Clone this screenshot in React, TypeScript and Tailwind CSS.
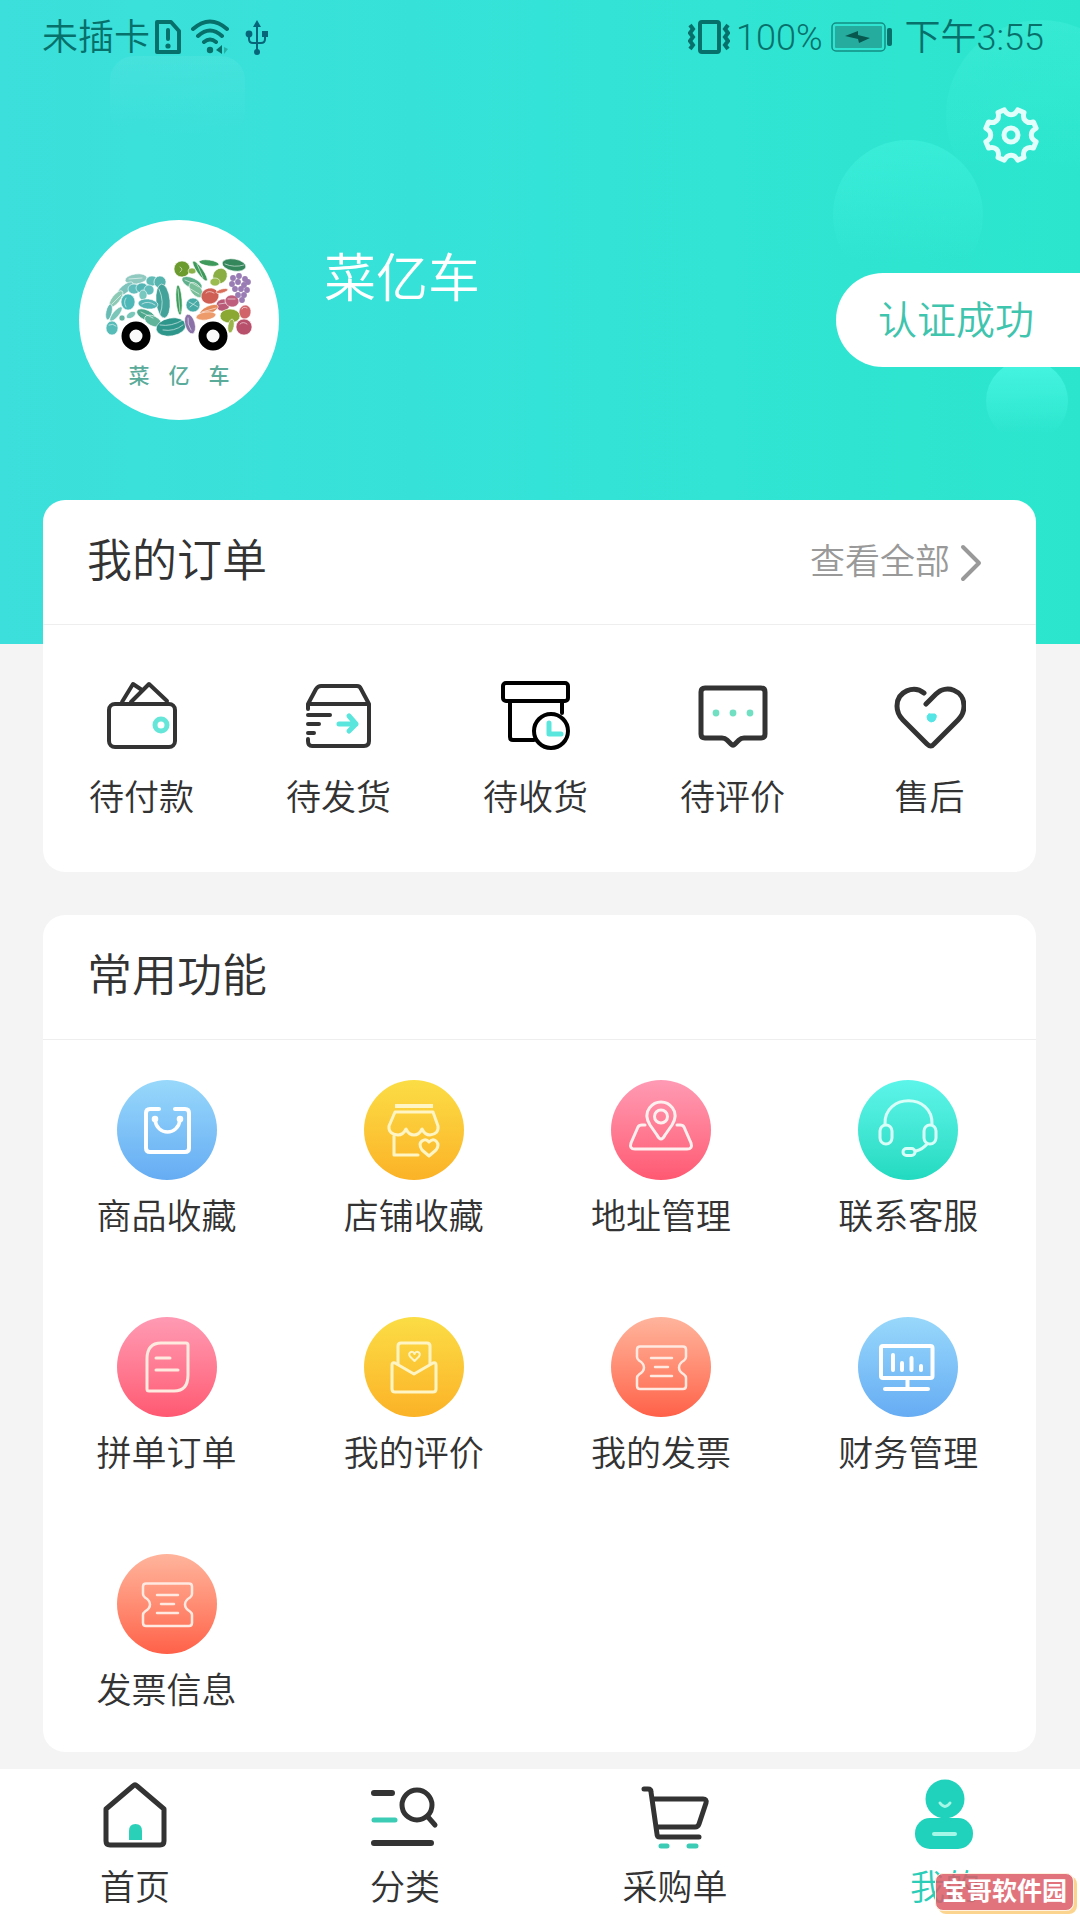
import type { ReactNode } from "react";

type Entry = { label: string; icon: ReactNode };

const INK = "#333333";
const TEAL = "#5ae6dc";

// eight teeth, with a rounded notch between each pair
const gearPath = (() => {
  const point = (deg: number, r: number) => {
    const a = (deg * Math.PI) / 180;
    return `${(29 + r * Math.sin(a)).toFixed(1)} ${(29 - r * Math.cos(a)).toFixed(1)}`;
  };
  let d = `M${point(-15, 26)}`;
  for (let k = 0; k < 8; k++) {
    const a = k * 45;
    d += `C${point(a - 10, 19)} ${point(a + 10, 19)} ${point(a + 15, 26)}L${point(a + 30, 26)}`;
  }
  return d + "Z";
})();

function LineIcon({ children, color = INK, width = 4 }: { children: ReactNode; color?: string; width?: number }) {
  return (
    <svg
      viewBox="0 0 72 72"
      className="size-[72px]"
      fill="none"
      stroke={color}
      strokeWidth={width}
      strokeLinecap="round"
      strokeLinejoin="round"
      aria-hidden="true"
    >
      {children}
    </svg>
  );
}

function RoundIcon({ className, stroke, children }: { className: string; stroke: string; children: ReactNode }) {
  return (
    <span className={`block size-[100px] rounded-full bg-linear-to-b ${className}`}>
      <svg
        viewBox="0 0 100 100"
        className="size-full"
        fill="none"
        stroke={stroke}
        strokeWidth="3"
        strokeLinecap="round"
        strokeLinejoin="round"
        aria-hidden="true"
      >
        {children}
      </svg>
    </span>
  );
}

const ticketIcon = (
  <RoundIcon className="from-[#ffb49c] to-[#ff6048]" stroke="#ffe9e0">
    <path d="M29 29.500H72Q75 29.500 75 32.500V40Q75 42 73 43.500Q68 46.500 68 50.500T73 57.500Q75 59 75 61V69Q75 72 72 72H29Q26 72 26 69V61Q26 59 28 57.500Q33 54.500 33 50.500T28 43.500Q26 42 26 40V32.500Q26 29.500 29 29.500Z" strokeWidth="2.500" />
    <path d="M40 41H61M44 50H57M40 59H61" strokeWidth="2.500" />
  </RoundIcon>
);

const orders: Entry[] = [
  {
    label: "待付款",
    icon: (
      <LineIcon>
        <rect x="3" y="25" width="66" height="43" rx="6" />
        <path d="M16 23L27 5L36 11M25 23L43 5L61 22" />
        <circle cx="55" cy="46" r="6" stroke="#66e6d8" strokeWidth="5" />
      </LineIcon>
    ),
  },
  {
    label: "待发货",
    icon: (
      <LineIcon>
        <path d="M5 30V25L13 10Q15 7 18 7H54Q57 7 58 10L66 25V62Q66 67 61 67H9Q5 67 5 62V60M5 25H66" />
        <path d="M5 36H27M5 45H16M5 54H11" />
        <path d="M36 45H53M46 37L53 45L46 52" stroke={TEAL} strokeWidth="5" />
      </LineIcon>
    ),
  },
  {
    label: "待收货",
    icon: (
      <LineIcon color="#000000">
        <rect x="3" y="4" width="65" height="18" rx="3" />
        <path d="M10 22V58Q10 61 13 61H34M62 22V34" />
        <circle cx="51" cy="52" r="17" />
        <path d="M49 44V55H61" stroke={TEAL} strokeWidth="5" />
      </LineIcon>
    ),
  },
  {
    label: "待评价",
    icon: (
      <LineIcon width={5}>
        <path d="M8 9H64Q68 9 68 13V55Q68 59 64 59H47Q44 59 42 61L38 65Q36 67 34 65L30 61Q28 59 25 59H8Q4 59 4 55V13Q4 9 8 9Z" />
        <g fill="#70dfc2" stroke="none">
          <circle cx="19" cy="34" r="3.400" />
          <circle cx="36" cy="34" r="3.400" />
          <circle cx="53" cy="34" r="3.400" />
        </g>
      </LineIcon>
    ),
  },
  {
    label: "售后",
    icon: (
      <LineIcon>
        <path d="M30 14C20 6 3 12 3 27Q3 35 9 41L33 65Q37 69 40 65L64 41Q70 35 70 27C70 11 52 5 42 15L32 25" strokeWidth="5" />
        <path d="M35 35H41Q43 36 42 39Q41 43 37 43Q33 42 33 38Q33 36 35 35Z" fill="#55e5e5" stroke="#55e5e5" strokeWidth="1" />
      </LineIcon>
    ),
  },
];

const features: Entry[] = [
  {
    label: "商品收藏",
    icon: (
      <RoundIcon className="from-[#98d8fb] to-[#66acf3]" stroke="#ffffff">
        <path d="M42 29H33Q29 29 29 33V68Q29 72 33 72H68Q72 72 72 68V33Q72 29 68 29H58" strokeWidth="4" />
        <path d="M38 40C40 56 61 56 63 40" strokeWidth="3.500" />
        <circle cx="38" cy="39" r="1.800" />
        <circle cx="63" cy="39" r="1.800" />
      </RoundIcon>
    ),
  },
  {
    label: "店铺收藏",
    icon: (
      <RoundIcon className="from-[#fbdd45] to-[#fbb226]" stroke="#fff5c4">
        <path d="M31 26H69" strokeLinecap="butt" strokeWidth="4" />
        <path d="M31 32H69L74 46Q75 54 66 55Q61 55 58 49Q55 55 50 55T42 49Q39 55 34 55Q24 54 25 46Z" />
        <path d="M30 56V75H54M65 76L58 70Q54 64 58 61Q62 58 65 62Q69 58 72 61Q76 65 72 70Z" />
      </RoundIcon>
    ),
  },
  {
    label: "地址管理",
    icon: (
      <RoundIcon className="from-[#ff9ab4] to-[#ff5872]" stroke="#fff0f0">
        <path d="M50 59Q48 59 46 55L39 45C30 30 43 22 50 22S70 30 61 45L54 55Q52 59 50 59Z" />
        <circle cx="50" cy="36.500" r="6.500" />
        <path d="M34 45H31Q28 45 27 47L20 63Q18 69 24 69H76Q82 69 80 63L73 47Q72 45 69 45H66" />
      </RoundIcon>
    ),
  },
  {
    label: "联系客服",
    icon: (
      <RoundIcon className="from-[#5cf5ea] to-[#20dac0]" stroke="#d8fff8">
        <path d="M27 44C26 13 75 13 74 44" />
        <rect x="22" y="45" width="12" height="19" rx="6" />
        <rect x="66" y="45" width="12" height="19" rx="6" />
        <rect x="45" y="68.500" width="12" height="7" rx="3.500" />
        <path d="M58 71Q65 69 69 64" />
      </RoundIcon>
    ),
  },
  {
    label: "拼单订单",
    icon: (
      <RoundIcon className="from-[#ff9ab4] to-[#ff5872]" stroke="#ffeadf">
        <path d="M44 26H69Q71 26 71 28V58Q71 74 57 74H32Q30 74 30 72V42Q30 26 44 26Z" />
        <path d="M39 41H53M39 53H61" />
      </RoundIcon>
    ),
  },
  {
    label: "我的评价",
    icon: (
      <RoundIcon className="from-[#fbdd45] to-[#fbb226]" stroke="#fff5c4">
        <path d="M34 47V29Q34 26 37 26H63Q66 26 66 29V47" />
        <path d="M50 57L31 46Q28 45 28 48V72Q28 75 31 75H69Q72 75 72 72V48Q72 45 69 46Z" />
        <path d="M50.500 44L46 39.500Q44 36 47 35Q49 34 50.500 37Q52 34 54 35Q57 36 55 39.500Z" strokeWidth="2" />
      </RoundIcon>
    ),
  },
  { label: "我的发票", icon: ticketIcon },
  {
    label: "财务管理",
    icon: (
      <RoundIcon className="from-[#98d8fb] to-[#66acf3]" stroke="#ffffff">
        <rect x="23" y="29" width="51.500" height="32" rx="2" strokeWidth="4" />
        <path d="M49.500 62V71M27 72H70M35 38V53M44 46V53M53.500 41V53M63 49V53" strokeWidth="4" />
      </RoundIcon>
    ),
  },
  { label: "发票信息", icon: ticketIcon },
];

const tabs: (Entry & { active?: boolean })[] = [
  {
    label: "首页",
    icon: (
      <LineIcon width={5}>
        <path d="M7 30L34 7Q36 5 38 7L65 30V62Q65 66 61 66H11Q7 66 7 62Z" />
        <path d="M30 61V52Q30 45 36.500 45T43 52V61Z" fill="#2bd0b8" stroke="none" />
      </LineIcon>
    ),
  },
  {
    label: "分类",
    icon: (
      <LineIcon width={5}>
        <path d="M5 14H23M5 64H62" strokeWidth="6" />
        <path d="M5 41H26" stroke="#3cccb6" />
        <circle cx="48" cy="26" r="15" />
        <path d="M59 38L66 46" />
      </LineIcon>
    ),
  },
  {
    label: "采购单",
    icon: (
      <LineIcon width={5}>
        <path d="M5 10H9Q12 10 12 13L18 55Q18 58 21 58H60M14 20H64Q68 20 67 24L60 45Q59 48 56 48H18" />
        <path d="M22 67H28M50 67H57" stroke="#3cccb6" />
      </LineIcon>
    ),
  },
  {
    label: "我的",
    active: true,
    icon: (
      <LineIcon>
        <g fill="#20d2bc" stroke="none">
          <circle cx="36" cy="20" r="19.500" />
          <rect x="6" y="39" width="58" height="31" rx="15" />
        </g>
        <path d="M31 24Q36 31 41 24" stroke="#a5f7e8" strokeWidth="3" />
        <path d="M25 55H46" stroke="#a5f7e8" />
      </LineIcon>
    ),
  },
];

// cx, cy, rx, ry, rotation, colour
const vegetables: [number, number, number, number, number, string][] = [
  [57, 59, 11, 5, -8, "#8fc9c0"],
  [46, 69, 10, 4, -40, "#7fc4bc"],
  [37, 79, 10, 4, -52, "#8ccab6"],
  [73, 61, 6, 5, 0, "#62bdb8"],
  [81, 62, 6, 6, 20, "#56b5ae"],
  [55, 69, 6, 5, 0, "#62bdbd"],
  [63, 68, 6, 5, 0, "#55b5b5"],
  [70, 70, 5, 5, 0, "#62bdbd"],
  [64, 75, 4, 5, 0, "#7ac8c0"],
  [84, 81, 7, 17, -5, "#43a39a"],
  [49, 82, 7, 8, 0, "#4fb8b8"],
  [69, 84, 10, 5, 6, "#55b5b5"],
  [30, 92, 3, 8, 12, "#68bcb4"],
  [37, 94, 3, 9, 40, "#7bc6ba"],
  [43, 98, 3, 3, 0, "#66b4a2"],
  [52, 95, 5, 3, -30, "#7ac8ba"],
  [67, 95, 10, 5, 25, "#4fa88c"],
  [74, 101, 9, 5, 25, "#61b49a"],
  [33, 108, 6, 7, 0, "#58bdb8"],
  [92, 107, 15, 9, -10, "#2f968c"],
  [111, 104, 5, 10, -15, "#8b73a8"],
  [103, 49, 8, 8, 0, "#6c9a2f"],
  [113, 51, 4, 3, 0, "#8bb14a"],
  [121, 51, 3, 12, -35, "#3f9a5c"],
  [130, 43, 10, 3, 8, "#3f9a5c"],
  [155, 45, 12, 6, 10, "#35865c"],
  [141, 56, 7, 8, 30, "#8aae45"],
  [136, 62, 5, 4, 0, "#9abc50"],
  [113, 63, 11, 5, 25, "#5eb08c"],
  [117, 70, 9, 5, 50, "#7abf9a"],
  [100, 80, 3, 15, -4, "#3f9e5e"],
  [114, 85, 7, 7, 0, "#49aaa6"],
  [131, 76, 9, 8, -12, "#cf5f55"],
  [143, 71, 6, 2, -15, "#d9705a"],
  [144, 85, 7, 6, -15, "#b85a78"],
  [153, 81, 7, 6, 10, "#c0607e"],
  [130, 90, 10, 4, -25, "#e58a5a"],
  [127, 96, 10, 4, -8, "#ee9c6c"],
  [166, 92, 6, 7, 10, "#d0646a"],
  [151, 96, 10, 7, 0, "#8aa832"],
  [152, 106, 3, 7, 10, "#9cb54a"],
  [165, 107, 8, 8, 0, "#b9506b"],
];

const grapes = [
  [154, 58], [160, 56], [166, 59], [153, 64], [159, 62], [165, 65], [169, 62],
  [156, 69], [162, 69], [168, 70], [159, 75], [165, 75], [163, 80],
];

function TruckLogo() {
  return (
    <svg viewBox="0 0 200 144" className="h-36 w-[200px]" aria-hidden="true">
      {vegetables.map(([cx, cy, rx, ry, turn, fill], i) => (
        <ellipse
          key={i}
          cx={cx}
          cy={cy}
          rx={rx}
          ry={ry}
          fill={fill}
          stroke="#ffffff"
          strokeWidth="0.600"
          transform={`rotate(${turn} ${cx} ${cy})`}
        />
      ))}
      {grapes.map(([cx, cy], i) => (
        <circle key={i} cx={cx} cy={cy} r="2.900" fill="#9a7db4" />
      ))}
      <g fill="none" stroke="#ffffff" strokeWidth="0.800" strokeLinecap="round" opacity="0.700">
        <path d="M80 69Q86 82 81 94M81 105Q92 107 104 100M84 110Q95 112 104 105M47 78Q44 82 47 87M63 84Q69 80 76 85" />
        <path d="M146 44Q155 48 165 45M118 44L124 58M106 60Q114 63 120 67M110 68L120 74M62 92L74 98M99 69L101 92" />
        <path d="M110 82L119 87M111 87L118 81M127 73Q130 70 135 73M123 92L137 88M163 89Q164 86 168 88M161 104Q164 101 168 104M109 98Q108 104 112 110" />
        <path d="M101 47Q105 49 101 52M30 105Q34 103 37 106M140 84L147 83M149 79L156 79M50 59L63 58M33 84L42 75" />
      </g>
      <circle cx="57" cy="116" r="15.500" fill="#ffffff" />
      <circle cx="134" cy="116" r="15.500" fill="#ffffff" />
      <circle cx="57" cy="116" r="10.500" fill="#fafafa" stroke="#000000" strokeWidth="8" />
      <circle cx="134" cy="116" r="10.500" fill="#fafafa" stroke="#000000" strokeWidth="8" />
    </svg>
  );
}

function StatusBar() {
  return (
    <div className="flex h-[74px] items-center justify-between pr-9 pl-[42px] text-4xl text-[#08706b]">
      <div className="flex items-center">
        <span className="pt-0.5">未插卡</span>
        <svg viewBox="0 0 28 36" className="ml-1 h-9 w-7" fill="none" stroke="#08706b" strokeWidth="4" strokeLinejoin="round">
          <path d="M3 3H17L25 12V33H3Z" />
          <path d="M14 11V20" strokeLinecap="round" />
          <circle cx="14" cy="27" r="2.600" fill="#08706b" stroke="none" />
        </svg>
        <svg viewBox="0 0 40 36" className="ml-2 h-9 w-10" fill="none" stroke="#08706b" strokeWidth="4" strokeLinecap="round">
          <path d="M3 10Q20 -5 37 10M8 17Q20 6 32 17M14 23Q20 18 26 23" />
          <circle cx="20" cy="31" r="3.200" fill="#08706b" stroke="none" />
          <path d="M32 26V35L26 31Z" fill="#08706b" stroke="none" />
          <path d="M34 28V35L38 30Z" fill="#25b3a6" stroke="none" />
        </svg>
        <svg viewBox="0 0 26 36" className="ml-[14px] h-9 w-[26px]" fill="none" stroke="#07657a" strokeWidth="2">
          <path d="M13 6V32M5 15V20Q5 24 9 24H17Q21 24 21 20V15" />
          <path d="M13 1L17 8H9ZM18 12H24V18H18Z" fill="#07657a" stroke="none" />
          <circle cx="5" cy="15" r="3.400" fill="#07657a" stroke="none" />
          <circle cx="13" cy="33" r="3" fill="#07657a" stroke="none" />
        </svg>
      </div>
      <div className="flex items-center">
        <svg viewBox="0 0 42 36" className="h-9 w-[42px]" fill="none" stroke="#08706b" strokeWidth="4">
          <rect x="12" y="3" width="19" height="30" rx="2" />
          <path d="M2 6L5 10L2 14L5 18L2 22L5 26L2 30M40 6L37 10L40 14L37 18L40 22L37 26L40 30" strokeWidth="4" />
        </svg>
        <span className="ml-1.5 pt-0.5">100%</span>
        <svg viewBox="0 0 62 30" className="ml-2 h-[30px] w-[62px]">
          <rect x="1" y="1" width="53" height="28" rx="4" fill="none" stroke="#138d83" strokeWidth="1.500" />
          <rect x="4" y="4" width="47" height="22" rx="1" fill="#26ac9f" />
          <path d="M14 14L27 9V13L39 16L28 21L27 17Z" fill="#07584f" />
          <rect x="56" y="6" width="5" height="18" rx="2" fill="#08706b" />
        </svg>
        <span className="ml-3 pt-0.5">下午3:55</span>
      </div>
    </div>
  );
}

function Header() {
  return (
    <header className="relative overflow-hidden bg-linear-to-r from-[#3cdfdb] via-[#34e3d7] to-[#2be6cd] pb-56">
      {/* soft bubbles */}
      <div className="absolute top-14 left-[110px] h-20 w-[135px] rounded-3xl bg-linear-to-b from-white/6 to-transparent" />
      <div className="absolute top-5 -right-14 size-[190px] rounded-full bg-linear-to-b from-[#4df2de]/30 to-transparent to-80%" />
      <div className="absolute top-[140px] right-[97px] size-[150px] rounded-full bg-linear-to-b from-[#3df0dc]/70 to-transparent to-80%" />
      <div className="absolute top-[360px] right-3 size-[82px] rounded-full bg-linear-to-b from-[#46f5e2] to-transparent to-90%" />

      <div className="relative">
        <StatusBar />
        <div className="flex justify-end px-10 pt-8">
          <button type="button" aria-label="设置" className="size-[58px]">
            <svg viewBox="0 0 58 58" className="size-full" fill="none" stroke="#e2fffb" strokeWidth="5" strokeLinejoin="round">
              <path d={gearPath} />
              <circle cx="29" cy="29" r="7" />
            </svg>
          </button>
        </div>
        <div className="mt-14 flex items-center pl-[79px]">
          <div className="size-[200px] overflow-hidden rounded-full bg-white">
            <TruckLogo />
            <div className="flex justify-center gap-[19px] text-[21px] leading-6 font-medium text-[#5aab9a]">
              <span>菜</span>
              <span>亿</span>
              <span>车</span>
            </div>
          </div>
          <h1 className="mt-[30px] ml-[45px] self-start text-[52px] leading-[60px] text-white">菜亿车</h1>
          <button type="button" className="ml-auto h-[94px] rounded-l-full bg-white pt-0.5 pr-[46px] pl-[42px] text-[39px] leading-[48px] text-[#3fc4ae]">
            认证成功
          </button>
        </div>
      </div>
    </header>
  );
}

function Card({ title, action, children }: { title: string; action?: ReactNode; children: ReactNode }) {
  return (
    <section className="rounded-[22px] bg-white">
      <div className="flex h-[125px] items-center justify-between border-b border-[#eeeeee] pr-[54px] pl-11">
        <h2 className="text-[45px] leading-[60px]">{title}</h2>
        {action}
      </div>
      {children}
    </section>
  );
}

export default function App() {
  return (
    <div className="relative flex min-h-screen flex-col bg-[#f5f4f5] font-['Roboto','Noto_Sans_CJK_SC',sans-serif] font-[350] text-[#333333]">
      <Header />

      <main className="relative -mt-36 mr-11 ml-[43px] space-y-[43px]">
        <Card
          title="我的订单"
          action={
            <a href="#orders" className="flex items-center gap-2.5 pt-0.5 text-[35px] leading-[48px] text-[#999999]">
              查看全部
              <svg viewBox="0 0 22 40" className="h-10 w-[22px]" fill="none" stroke="#999999" strokeWidth="4" strokeLinecap="round" strokeLinejoin="round">
                <path d="M3 4L19 20L3 36" />
              </svg>
            </a>
          }
        >
          <ul className="grid grid-cols-5 pt-[54px] pr-2 pb-[49px]">
            {orders.map((item) => (
              <li key={item.label}>
                <a href="#orders" className="flex flex-col items-center gap-6 text-[35px] leading-[48px]">
                  {item.icon}
                  {item.label}
                </a>
              </li>
            ))}
          </ul>
        </Card>

        <Card title="常用功能">
          <ul className="grid grid-cols-4 gap-y-[75px] pt-10 pr-1 pb-9">
            {features.map((item) => (
              <li key={item.label}>
                <a href="#features" className="flex flex-col items-center gap-[14px] text-[35px] leading-[48px]">
                  {item.icon}
                  {item.label}
                </a>
              </li>
            ))}
          </ul>
        </Card>
      </main>

      <nav className="mt-auto grid grid-cols-4 bg-white pt-2.5 pb-[7px]">
        {tabs.map((tab) => (
          <a
            key={tab.label}
            href="#tab"
            aria-current={tab.active ? "page" : undefined}
            className={`flex flex-col items-center gap-[14px] text-[35px] leading-[48px] ${tab.active ? "text-[#2ccdb8]" : ""}`}
          >
            {tab.icon}
            {tab.label}
          </a>
        ))}
      </nav>

      <div className="absolute right-1.5 bottom-[9px] rounded-lg border border-[#fff3df] bg-[#dc5a66]/85 px-1.5 text-[25px] leading-9 font-bold text-white shadow-[3px_3px_0_#fbd590]">
        宝哥软件园
      </div>
    </div>
  );
}
